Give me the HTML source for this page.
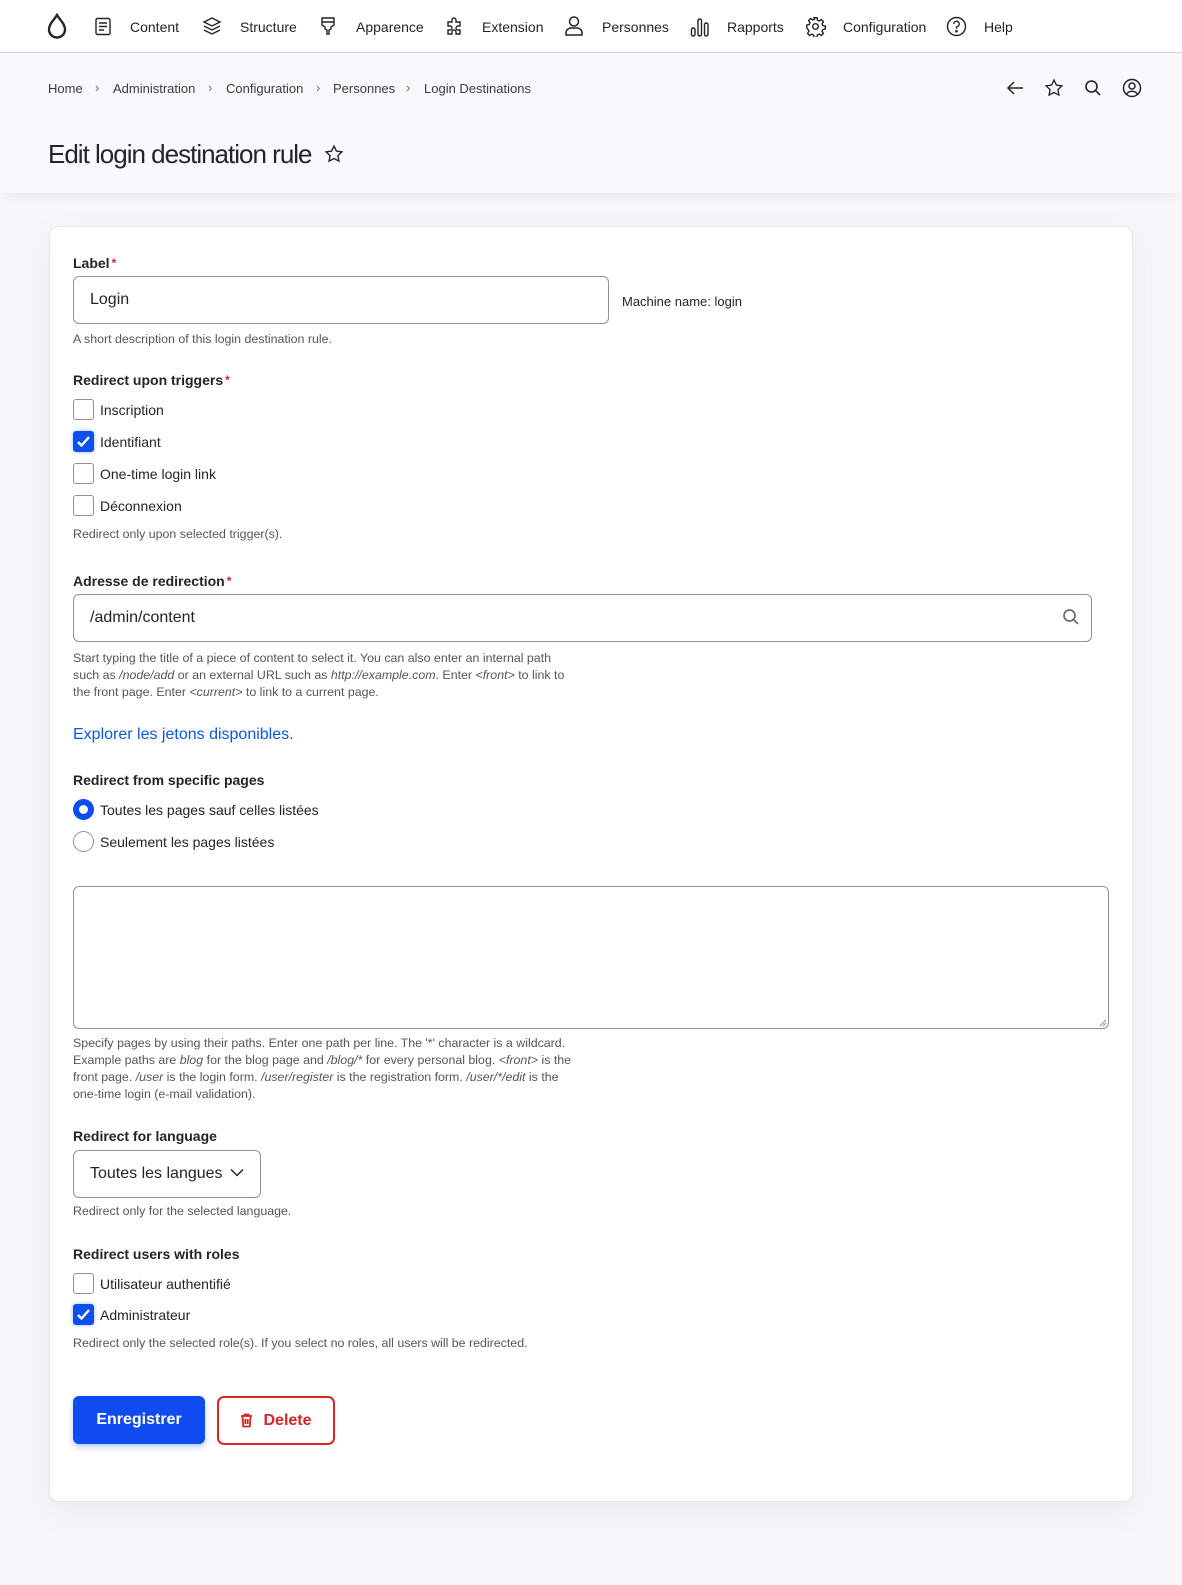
<!DOCTYPE html>
<html><head><meta charset="utf-8"><style>
*{box-sizing:border-box;margin:0;padding:0}
body{width:1182px;height:1585px;background:#f7f7fb;font-family:"Liberation Sans",Arial,sans-serif;color:#232429;position:relative;overflow:hidden}
.a{position:absolute;white-space:nowrap}
.top{position:absolute;left:0;top:0;width:1182px;height:53px;background:#fff;border-bottom:1px solid #d8d8de;box-shadow:0 1px 2px rgba(0,0,0,.06)}
.hdr{position:absolute;left:0;top:53px;width:1182px;height:140px;background:#f9f9fd;box-shadow:0 8px 12px -6px rgba(0,0,0,.08)}
.nav{font-size:14px;color:#232429;line-height:16px}
.card{position:absolute;left:49px;top:226px;width:1084px;height:1276px;background:#fff;border:1px solid #e6e6ec;border-radius:10px;box-shadow:0 10px 30px rgba(60,60,100,.08)}
.lbl{font-size:14px;font-weight:bold;line-height:16px}
.req{color:#d72222;font-size:12px;vertical-align:top;margin-left:2px}
.desc{font-size:12.4px;color:#55565b;line-height:17px}
.opt{font-size:14px;line-height:16px}
.inp{position:absolute;border:1px solid #8e929c;border-radius:6px;background:#fff;font-size:16px;padding-left:16px;display:flex;align-items:center}
.cb{position:absolute;width:21px;height:21px;border:1px solid #8e929c;border-radius:3px;background:#fff}
.cb.on{background:#0d4ef0;border-color:#0d4ef0;box-shadow:0 0 4px rgba(13,78,240,.4)}
.rd{position:absolute;width:21px;height:21px;border:1px solid #8e929c;border-radius:50%;background:#fff}
.rd.on{border:6px solid #0d4ef0}
svg{position:absolute}
.bc{font-size:13px;color:#3b3c40;top:81px}
.ch{font-size:13px;color:#6b6c70;top:80px}
</style></head><body>
<div class="top"></div>
<svg style="left:46px;top:13px" width="22" height="26" viewBox="0 0 22 26"><path d="M11 2 C8 7 3 11 3 16.5 A8 8 0 0 0 19 16.5 C19 11 14 7 11 2Z" fill="none" stroke="#232429" stroke-width="2.4"/></svg>
<svg style="left:94px;top:17px" width="18" height="19" viewBox="0 0 18 19" fill="none" stroke="#232429" stroke-width="1.4"><rect x="2" y="1.5" width="14" height="16" rx="1.5"/><path d="M5 6h8M5 9.5h8M5 13h5"/></svg>
<div class="a nav" style="left:130px;top:19px">Content</div>
<svg style="left:202px;top:16px" width="20" height="20" viewBox="0 0 20 20" fill="none" stroke="#232429" stroke-width="1.4"><path d="M10 2 2 6l8 4 8-4z M2 10l8 4 8-4 M2 14l8 4 8-4"/></svg>
<div class="a nav" style="left:240px;top:19px">Structure</div>
<svg style="left:320px;top:16px" width="16" height="20" viewBox="0 0 16 20" fill="none" stroke="#232429" stroke-width="1.4"><path d="M2 2h12v7l-3 2v2l-2 1v4H7v-4L5 13v-2L2 9z M2 6h12"/></svg>
<div class="a nav" style="left:356px;top:19px">Apparence</div>
<svg style="left:445px;top:16px" width="20" height="20" viewBox="0 0 20 20" fill="none" stroke="#232429" stroke-width="1.4"><path d="M3 6h4V4a2 2 0 0 1 4 0v2h4v4h-2a2 2 0 0 0 0 4h2v4h-4v-2a2 2 0 0 0-4 0v2H3v-4h2a2 2 0 0 0 0-4H3z"/></svg>
<div class="a nav" style="left:482px;top:19px">Extension</div>
<svg style="left:564px;top:15px" width="20" height="22" viewBox="0 0 20 22" fill="none" stroke="#232429" stroke-width="1.5"><circle cx="10" cy="6.5" r="4.5"/><path d="M2 20v-2a5 5 0 0 1 5-5h6a5 5 0 0 1 5 5v2z"/></svg>
<div class="a nav" style="left:602px;top:19px">Personnes</div>
<svg style="left:690px;top:16px" width="20" height="21" viewBox="0 0 20 21" fill="none" stroke="#232429" stroke-width="1.4"><rect x="1.5" y="12" width="3.5" height="8" rx="1.7"/><rect x="8" y="3" width="3.5" height="17" rx="1.7"/><rect x="14.5" y="7" width="3.5" height="13" rx="1.7"/></svg>
<div class="a nav" style="left:727px;top:19px">Rapports</div>
<svg style="left:805px;top:16px" width="21" height="21" viewBox="0 0 24 24" fill="none" stroke="#232429" stroke-width="1.6"><circle cx="12" cy="12" r="3.2"/><path d="M10.3 2h3.4l.6 2.8 2 .9 2.4-1.6 2.4 2.4-1.6 2.4.9 2 2.8.6v3.4l-2.8.6-.9 2 1.6 2.4-2.4 2.4-2.4-1.6-2 .9-.6 2.8h-3.4l-.6-2.8-2-.9-2.4 1.6-2.4-2.4 1.6-2.4-.9-2L2 13.7v-3.4l2.8-.6.9-2-1.6-2.4 2.4-2.4 2.4 1.6 2-.9z"/></svg>
<div class="a nav" style="left:843px;top:19px">Configuration</div>
<svg style="left:946px;top:16px" width="21" height="21" viewBox="0 0 21 21" fill="none" stroke="#232429" stroke-width="1.4"><circle cx="10.5" cy="10.5" r="9"/><path d="M7.8 8a2.7 2.7 0 1 1 3.6 2.5c-.7.3-.9.8-.9 1.6v.6"/><circle cx="10.5" cy="15.2" r=".6" fill="#232429"/></svg>
<div class="a nav" style="left:984px;top:19px">Help</div>

<div class="hdr"></div>
<div class="a bc" style="left:48px">Home</div>
<div class="a ch" style="left:95px">›</div>
<div class="a bc" style="left:113px">Administration</div>
<div class="a ch" style="left:208px">›</div>
<div class="a bc" style="left:226px">Configuration</div>
<div class="a ch" style="left:316px">›</div>
<div class="a bc" style="left:333px">Personnes</div>
<div class="a ch" style="left:406px">›</div>
<div class="a bc" style="left:424px">Login Destinations</div>
<svg style="left:1006px;top:80px" width="18" height="16" viewBox="0 0 18 16" fill="none" stroke="#232429" stroke-width="1.5"><path d="M17 8H2M8 2 2 8l6 6"/></svg>
<svg style="left:1044px;top:78px" width="20" height="20" viewBox="0 0 24 24" fill="none" stroke="#232429" stroke-width="1.6"><path d="M12 2.5l2.9 6 6.6.9-4.8 4.6 1.2 6.5L12 17.4l-5.9 3.1 1.2-6.5L2.5 9.4l6.6-.9z"/></svg>
<svg style="left:1084px;top:79px" width="18" height="18" viewBox="0 0 18 18" fill="none" stroke="#232429" stroke-width="1.6"><circle cx="7.5" cy="7.5" r="5.5"/><path d="M11.5 11.5 16 16"/></svg>
<svg style="left:1122px;top:78px" width="20" height="20" viewBox="0 0 20 20" fill="none" stroke="#232429" stroke-width="1.5"><circle cx="10" cy="10" r="8.5"/><circle cx="10" cy="8" r="3"/><path d="M4.5 16.2c1.2-2 3.2-3 5.5-3s4.3 1 5.5 3"/></svg>
<div class="a" style="left:48px;top:139px;font-size:26px;letter-spacing:-1px;color:#232429">Edit login destination rule</div>
<svg style="left:324px;top:144px" width="20" height="20" viewBox="0 0 24 24" fill="none" stroke="#232429" stroke-width="1.7"><path d="M12 2.5l2.9 6 6.6.9-4.8 4.6 1.2 6.5L12 17.4l-5.9 3.1 1.2-6.5L2.5 9.4l6.6-.9z"/></svg>

<div class="card"></div>
<div class="a lbl" style="left:73px;top:255px">Label<span class="req">*</span></div>
<div class="inp" style="left:73px;top:276px;width:536px;height:48px">Login</div>
<div class="a" style="left:622px;top:294px;font-size:13px">Machine name: login</div>
<div class="a desc" style="left:73px;top:331px">A short description of this login destination rule.</div>

<div class="a lbl" style="left:73px;top:372px">Redirect upon triggers<span class="req">*</span></div>
<div class="cb" style="left:73px;top:399px"></div><div class="a opt" style="left:100px;top:402px">Inscription</div>
<div class="cb on" style="left:73px;top:431px"></div><svg style="left:76px;top:435px" width="15" height="13" viewBox="0 0 15 13" fill="none" stroke="#fff" stroke-width="2.4"><path d="M2 7l3.5 3.5L13 2"/></svg><div class="a opt" style="left:100px;top:434px">Identifiant</div>
<div class="cb" style="left:73px;top:463px"></div><div class="a opt" style="left:100px;top:466px">One-time login link</div>
<div class="cb" style="left:73px;top:495px"></div><div class="a opt" style="left:100px;top:498px">Déconnexion</div>
<div class="a desc" style="left:73px;top:526px">Redirect only upon selected trigger(s).</div>

<div class="a lbl" style="left:73px;top:573px">Adresse de redirection<span class="req">*</span></div>
<div class="inp" style="left:73px;top:594px;width:1019px;height:48px">/admin/content</div>
<svg style="left:1062px;top:608px" width="18" height="18" viewBox="0 0 18 18" fill="none" stroke="#6b6c70" stroke-width="1.7"><circle cx="7.5" cy="7.5" r="5.5"/><path d="M11.5 11.5 16 16"/></svg>
<div class="a desc" style="left:73px;top:650px;white-space:normal;width:520px">Start typing the title of a piece of content to select it. You can also enter an internal path<br>such as <i>/node/add</i> or an external URL such as <i>http://example.com</i>. Enter <i>&lt;front&gt;</i> to link to<br>the front page. Enter <i>&lt;current&gt;</i> to link to a current page.</div>
<div class="a" style="left:73px;top:726px;font-size:16px;color:#0a56e8">Explorer les jetons disponibles.</div>

<div class="a lbl" style="left:73px;top:772px">Redirect from specific pages</div>
<div class="rd on" style="left:73px;top:799px"></div><div class="a opt" style="left:100px;top:802px">Toutes les pages sauf celles listées</div>
<div class="rd" style="left:73px;top:831px"></div><div class="a opt" style="left:100px;top:834px">Seulement les pages listées</div>
<div class="inp" style="left:73px;top:886px;width:1036px;height:143px"></div>
<svg style="left:1099px;top:1019px" width="8" height="8" viewBox="0 0 8 8" stroke="#8e929c"><path d="M1 7 7 1M4 7l3-3"/></svg>
<div class="a desc" style="left:73px;top:1035px;white-space:normal;width:530px">Specify pages by using their paths. Enter one path per line. The '*' character is a wildcard.<br>Example paths are <i>blog</i> for the blog page and <i>/blog/*</i> for every personal blog. <i>&lt;front&gt;</i> is the<br>front page. <i>/user</i> is the login form. <i>/user/register</i> is the registration form. <i>/user/*/edit</i> is the<br>one-time login (e-mail validation).</div>

<div class="a lbl" style="left:73px;top:1128px">Redirect for language</div>
<div class="inp" style="left:73px;top:1150px;width:188px;height:48px">Toutes les langues</div>
<svg style="left:230px;top:1168px" width="14" height="9" viewBox="0 0 14 9" fill="none" stroke="#232429" stroke-width="1.5"><path d="M1 1.5 7 7.5l6-6"/></svg>
<div class="a desc" style="left:73px;top:1203px">Redirect only for the selected language.</div>

<div class="a lbl" style="left:73px;top:1246px">Redirect users with roles</div>
<div class="cb" style="left:73px;top:1273px"></div><div class="a opt" style="left:100px;top:1276px">Utilisateur authentifié</div>
<div class="cb on" style="left:73px;top:1304px"></div><svg style="left:76px;top:1308px" width="15" height="13" viewBox="0 0 15 13" fill="none" stroke="#fff" stroke-width="2.4"><path d="M2 7l3.5 3.5L13 2"/></svg><div class="a opt" style="left:100px;top:1307px">Administrateur</div>
<div class="a desc" style="left:73px;top:1335px">Redirect only the selected role(s). If you select no roles, all users will be redirected.</div>

<div class="a" style="left:73px;top:1396px;width:132px;height:48px;background:#0f4bef;border-radius:6px;color:#fff;font-size:16px;font-weight:bold;display:flex;align-items:center;justify-content:center;box-shadow:0 3px 6px rgba(15,75,239,.3)">Enregistrer</div>
<div class="a" style="left:217px;top:1396px;width:118px;height:49px;border:2px solid #dc2323;border-radius:7px;color:#dc2323;font-size:16px;font-weight:bold;display:flex;align-items:center;justify-content:center;gap:10px"><svg style="position:static" width="13" height="15" viewBox="0 0 13 15" fill="none" stroke="#dc2323" stroke-width="1.8"><path d="M1 3h11M4.5 3V1.5h4V3M2.5 3l.7 10.5h6.6L10.5 3M5.3 6v5M7.7 6v5"/></svg>Delete</div>
</body></html>
